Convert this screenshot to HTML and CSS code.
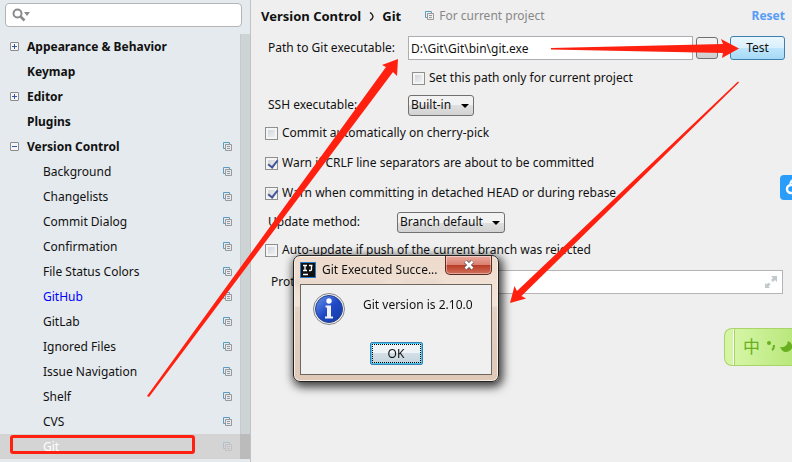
FILE: index.html
```html
<!DOCTYPE html>
<html lang="en">
<head>
    <meta charset="UTF-8">
    <title>Settings - Git</title>
    <link rel="stylesheet" href="styles.css">
</head>
<body>
    <svg class="defs" width="0" height="0" aria-hidden="true">
        <symbol id="copy" viewBox="0 0 10 10">
            <path d="M2 6.500H.5V.5h6V2" fill="none" stroke="#5b9dc0"/>
            <path d="M2.500 2.500h6v6h-6zM4 4.500h3M4 6.500h3" fill="none" stroke="#999"/>
        </symbol>
    </svg>

    <div class="settings">
        <nav class="sidebar">
            <div class="search">
                <svg width="20" height="14" viewBox="0 0 20 14" aria-hidden="true">
                    <circle cx="5.500" cy="5.500" r="4" fill="none" stroke="#8b8b8b" stroke-width="2"/>
                    <path d="M8.500 8.500l4 4" stroke="#8b8b8b" stroke-width="2.500"/>
                    <path d="M12 4h6l-3 4z" fill="#8b8b8b"/>
                </svg>
                <input type="text" aria-label="Search settings">
            </div>
            <ul class="tree">
                <li class="group"><button class="toggle plus" aria-label="Expand"></button><a href="#">Appearance &amp; Behavior</a></li>
                <li class="group"><a href="#">Keymap</a></li>
                <li class="group"><button class="toggle plus" aria-label="Expand"></button><a href="#">Editor</a></li>
                <li class="group"><a href="#">Plugins</a></li>
                <li class="group"><button class="toggle" aria-label="Collapse"></button><a href="#">Version Control</a><svg class="copy"><use href="#copy"/></svg></li>
                <li><a href="#">Background</a><svg class="copy"><use href="#copy"/></svg></li>
                <li><a href="#">Changelists</a><svg class="copy"><use href="#copy"/></svg></li>
                <li><a href="#">Commit Dialog</a><svg class="copy"><use href="#copy"/></svg></li>
                <li><a href="#">Confirmation</a><svg class="copy"><use href="#copy"/></svg></li>
                <li><a href="#">File Status Colors</a><svg class="copy"><use href="#copy"/></svg></li>
                <li class="changed"><a href="#">GitHub</a><svg class="copy"><use href="#copy"/></svg></li>
                <li><a href="#">GitLab</a><svg class="copy"><use href="#copy"/></svg></li>
                <li><a href="#">Ignored Files</a><svg class="copy"><use href="#copy"/></svg></li>
                <li><a href="#">Issue Navigation</a><svg class="copy"><use href="#copy"/></svg></li>
                <li><a href="#">Shelf</a><svg class="copy"><use href="#copy"/></svg></li>
                <li><a href="#">CVS</a><svg class="copy"><use href="#copy"/></svg></li>
                <li class="selected"><a href="#">Git</a><svg class="copy"><use href="#copy"/></svg></li>
            </ul>
        </nav>

        <main class="content">
            <header class="heading">
                <h1>Version Control</h1>
                <svg width="5" height="9" viewBox="0 0 5 9" aria-hidden="true"><path d="M1 .5q3 2 3 4t-3 4" fill="none" stroke="#222" stroke-width="1.500"/></svg>
                <h1>Git</h1>
                <span class="scope"><svg class="copy"><use href="#copy"/></svg>For current project</span>
                <a class="reset" href="#">Reset</a>
            </header>

            <div class="row path">
                <label for="gitPath">Path to Git executable:</label>
                <input type="text" id="gitPath" value="D:\Git\Git\bin\git.exe">
                <button class="browse" aria-label="Browse"></button>
                <button class="test">Test</button>
            </div>
            <div class="row indent">
                <input type="checkbox" id="onlyProject"><label for="onlyProject">Set this path only for current project</label>
            </div>
            <div class="row ssh">
                <label for="ssh">SSH executable:</label>
                <span class="select"><select id="ssh"><option>Built-in</option></select></span>
            </div>
            <div class="row check">
                <input type="checkbox" id="cherry"><label for="cherry">Commit automatically on cherry-pick</label>
            </div>
            <div class="row check">
                <input type="checkbox" id="crlf" checked><label for="crlf">Warn if CRLF line separators are about to be committed</label>
            </div>
            <div class="row check">
                <input type="checkbox" id="detached" checked><label for="detached">Warn when committing in detached HEAD or during rebase</label>
            </div>
            <div class="row update">
                <label for="update">Update method:</label>
                <span class="select"><select id="update"><option>Branch default</option></select></span>
            </div>
            <div class="row auto">
                <input type="checkbox" id="auto"><label for="auto">Auto-update if push of the current branch was rejected</label>
            </div>
            <div class="row protected">
                <label for="branches">Protected branches:</label>
                <div class="expandable">
                    <input type="text" id="branches" value="master">
                    <svg width="12" height="12" viewBox="0 0 12 12" aria-hidden="true">
                        <path d="M6 0h6v6l-2-2-2 2-2-2 2-2zM0 7l1.500 1.500L3.500 6.500l2 2-2 2L5 12H0z" fill="#c2c8cb"/>
                    </svg>
                </div>
            </div>
        </main>
    </div>

    <div class="dialog" role="dialog" aria-labelledby="dialogTitle">
        <div class="titlebar">
            <svg width="16" height="16" viewBox="0 0 16 16" aria-hidden="true">
                <rect width="16" height="16" fill="#2879c8"/>
                <rect x="1" y="1" width="14" height="14" fill="#111"/>
                <path d="M3 3.500h4M5 3.500v5M3 8.500h4M9 3.500h3.500M11.500 3.500v4q0 1-1 1H9M3 12.500h5" fill="none" stroke="#fff" stroke-width="1.300"/>
            </svg>
            <span id="dialogTitle">Git Executed Succe...</span>
            <button class="close" aria-label="Close">
                <svg width="12" height="10" viewBox="0 0 12 10"><path d="M2.500 1.500l7 7M9.500 1.500l-7 7" stroke="#555" stroke-width="4"/><path d="M2.500 1.500l7 7M9.500 1.500l-7 7" stroke="#fff" stroke-width="2.500"/></svg>
            </button>
        </div>
        <div class="dialog-body">
            <div class="message">
                <svg width="32" height="32" viewBox="0 0 32 32" aria-hidden="true">
                    <defs>
                        <linearGradient id="blue" x2="1" y2="1"><stop stop-color="#6b96e8"/><stop offset=".5" stop-color="#2049c8"/><stop offset="1" stop-color="#1638a0"/></linearGradient>
                    </defs>
                    <circle cx="16" cy="16" r="15.500" fill="#eee" stroke="#888"/>
                    <circle cx="16" cy="16" r="13.500" fill="url(#blue)" stroke="#26458f"/>
                    <circle cx="16" cy="8" r="2.700" fill="#fff"/>
                    <path d="M12.500 12.500h5.500v11h2v2h-8v-2h2v-9h-1.500z" fill="#f2f2f2"/>
                </svg>
                <span>Git version is 2.10.0</span>
            </div>
            <button class="ok">OK</button>
        </div>
    </div>

    <div class="side-badge">
        <svg width="24" height="25" viewBox="0 0 24 25" aria-hidden="true">
            <circle cx="11" cy="14" r="4" fill="none" stroke="#fff" stroke-width="2.500"/>
            <path d="M10 9l2-4" fill="none" stroke="#fff" stroke-width="2"/>
        </svg>
    </div>

    <div class="ime" lang="zh-CN">
        <span>中</span>
        <svg width="34" height="20" viewBox="0 0 34 20" aria-hidden="true">
            <circle cx="3" cy="6" r="2" fill="#68b020"/>
            <path d="M8 8q0 4-2 5" fill="none" stroke="#68b020" stroke-width="2"/>
            <path d="M22 4q-1 7-8 6 2 5 6 5 7-1 6-7-1-3-4-4z" fill="#68b020"/>
        </svg>
    </div>

    <!-- annotations -->
    <div class="marker"></div>
    <svg class="arrows" width="792" height="462" viewBox="0 0 792 462" aria-hidden="true">
        <path d="M147 396L386 67l-4-2 16-6-1 17-4-4L149 397z"/>
        <path d="M551 48l172-4-2-5 18 9.500-17 9.500 1-5-172-3.500z"/>
        <path d="M738 81.500L517 291l-2.500-5-4.500 17 16-4.500-4.500-2.500L739 82.500z"/>
    </svg>
</body>
</html>
```
FILE: styles.css
```css
* {
    box-sizing: border-box;
}

body {
    margin: 0;
    font-family: "Noto Sans", "Noto Sans CJK SC", sans-serif;
    font-size: 12px;
    line-height: 14px;
    color: #111;
    background: #efefef;
    overflow: hidden;
}

button, input, select {
    font: inherit;
    color: inherit;
    margin: 0;
}

a {
    color: inherit;
    text-decoration: none;
}

.defs {
    position: absolute;
}

.settings {
    display: flex;
    min-height: 100vh;
}

/* left tree */
.sidebar {
    width: 250px;
    flex: none;
    background: #e5eaee;
}

.search {
    display: flex;
    align-items: center;
    height: 24px;
    margin: 3px 8px 7px 5px;
    padding-left: 6px;
    background: #fff;
    border: 1px solid #b4b4b4;
    border-radius: 4px;
}

.search svg {
    flex: none;
}

.search input {
    flex: 1;
    min-width: 0;
    border: none;
    outline: none;
    background: none;
}

.tree {
    margin: 0;
    padding: 0;
    list-style: none;
    background: linear-gradient(to left, #ced3d6 9px, #c5cace 9px, #c5cace 10px, transparent 10px);
}

.tree li {
    display: flex;
    align-items: center;
    height: 25px;
    padding: 0 17px 0 43px;
}

.tree .group {
    padding-left: 27px;
    font-weight: bold;
}

.tree .copy {
    margin-left: auto;
}

.tree .changed {
    color: #0000ff;
}

.tree .selected {
    color: #fff;
    background: linear-gradient(to left, #bbb 10px, #d4d4d4 10px);
}

.selected .copy {
    opacity: 0.3;
}

.copy {
    width: 10px;
    height: 10px;
    flex: none;
}

.toggle {
    width: 9px;
    height: 9px;
    margin: 0 8px 0 -17px;
    padding: 0;
    border: 1px solid #8a8a8a;
    border-radius: 1px;
    background: linear-gradient(#3858a0, #3858a0) center / 5px 1px no-repeat, #f5f5f5;
}

.toggle.plus {
    background: linear-gradient(#3858a0, #3858a0) center / 5px 1px no-repeat,
        linear-gradient(#3858a0, #3858a0) center / 1px 5px no-repeat, #f5f5f5;
}

/* right panel */
.content {
    flex: 1;
    min-width: 0;
    padding-right: 7px;
    border-left: 1px solid #c2c2c2;
}

.heading {
    display: flex;
    align-items: center;
    height: 32px;
    padding-left: 10px;
}

.heading h1 {
    margin: 0;
    font-size: 13px;
}

.heading > svg {
    margin: 0 8px;
}

.scope {
    display: flex;
    align-items: center;
    gap: 4px;
    margin-left: 24px;
    color: #888;
}

.reset {
    margin-left: auto;
    color: #589df6;
    font-weight: bold;
}

.row {
    display: flex;
    align-items: center;
    height: 28px;
    padding-left: 17px;
}

.row > label {
    white-space: nowrap;
}

.row input[type="text"] {
    height: 24px;
    min-width: 0;
    padding: 0 2px;
    border: 1px solid #abadb3;
    background: #fff;
}

.path {
    height: 32px;
}

.path label, .ssh label {
    width: 140px;
}

.path input {
    flex: 1;
}

.browse, .test {
    height: 22px;
    padding: 0;
    border: 1px solid #707070;
    border-radius: 3px;
    background: linear-gradient(#f2f2f2 50%, #dcdcdc 50%, #cfcfcf);
}

.browse {
    width: 22px;
    margin: 0 12px 0 3px;
}

.test {
    width: 55px;
    height: 24px;
    border-color: #3c7fb1;
    background: linear-gradient(#eaf6fd, #d9f0fc 50%, #bee6fd 50%, #a7d9f5);
}

.indent {
    padding-left: 161px;
}

.ssh {
    height: 26px;
}

.check {
    height: 30px;
}

.check, .auto {
    padding-left: 14px;
}

.row input[type="checkbox"] {
    appearance: none;
    flex: none;
    width: 13px;
    height: 13px;
    margin-right: 4px;
    border: 1px solid #8e8f8f;
    background: linear-gradient(135deg, #cbcfd5, #f6f6f6);
    box-shadow: inset 0 0 0 2px #f4f4f4;
}

.row input[type="checkbox"]:checked::before {
    content: "";
    display: block;
    width: 4px;
    height: 8px;
    margin: 0 0 0 4px;
    border: solid #3f5597;
    border-width: 0 2px 2px 0;
    transform: rotate(38deg);
}

.update label {
    width: 129px;
}

.select {
    position: relative;
}

.select select {
    appearance: none;
    height: 21px;
    padding: 0 21px 0 2px;
    border: 1px solid #707070;
    border-radius: 3px;
    background: linear-gradient(#f2f2f2 50%, #dfdfdf 50%, #d2d2d2);
}

.select::after {
    content: "";
    position: absolute;
    right: 5px;
    top: 9px;
    border: 4px solid transparent;
    border-top-color: #000;
    border-bottom: none;
    pointer-events: none;
}

.protected {
    height: 36px;
    padding-left: 20px;
}

.protected label {
    width: 128px;
}

.expandable {
    display: flex;
    align-items: center;
    flex: 1;
    height: 24px;
    margin-right: 2px;
    padding-right: 5px;
    background: #fff;
    border: 1px solid #b4b4b4;
}

.expandable input[type="text"] {
    flex: 1;
    height: 20px;
    border: none;
}

/* message window */
.dialog {
    position: absolute;
    left: 293px;
    top: 255px;
    width: 206px;
    padding: 0 6px 6px;
    border: 1px solid #222;
    border-radius: 7px;
    background: linear-gradient(rgba(236, 215, 199, 0.9), rgba(242, 226, 214, 0.9) 50px, #e5d3c5 51px, #dfc8b6);
    backdrop-filter: blur(3px);
    box-shadow: inset 0 0 0 1px #fbeee4, 2px 3px 10px 2px rgba(0, 0, 0, 0.75);
}

.titlebar {
    display: flex;
    align-items: center;
    height: 28px;
    gap: 6px;
}

.close {
    display: flex;
    align-items: center;
    justify-content: center;
    align-self: flex-start;
    width: 47px;
    height: 19px;
    margin-left: auto;
    padding: 0;
    border: 1px solid #5a2a24;
    border-top: none;
    border-radius: 0 0 5px 5px;
    background: linear-gradient(#eba99d, #d98071 50%, #b93a24 50%, #d0705a);
    box-shadow: inset 0 0 0 1px rgba(255, 255, 255, 0.4);
}

.dialog-body {
    height: 91px;
    padding: 8px 12px;
    border: 1px solid #6f6860;
    background: #f0f0f0;
}

.message {
    display: flex;
    gap: 18px;
    height: 49px;
}

.message span {
    padding-top: 5px;
}

.ok {
    display: block;
    width: 53px;
    height: 23px;
    margin: 0 auto;
    padding: 0;
    border: 1px solid #3c7fb1;
    border-radius: 2px;
    outline: 1px dotted #000;
    outline-offset: -3px;
    background: linear-gradient(#eef3f6 50%, #d3dfe6 50%, #c3d3dc);
    box-shadow: inset 0 0 0 1px #48c8f0;
}

/* floating widgets on the right edge */
.side-badge {
    position: absolute;
    right: 0;
    top: 175px;
    width: 12px;
    height: 25px;
    overflow: hidden;
    border-radius: 4px 0 0 4px;
    background: #2a9dfb;
}

.ime {
    position: absolute;
    right: 0;
    top: 328px;
    display: flex;
    align-items: center;
    gap: 6px;
    width: 68px;
    height: 38px;
    padding-left: 18px;
    overflow: hidden;
    border: 1px solid #a9d468;
    border-right: none;
    border-radius: 8px 0 0 8px;
    background: linear-gradient(to right, #d5f5a5 8px, #fff 8px, #fff 9px, #a9d468 9px, #a9d468 10px, #d5f5a5 10px, #b9e87c);
    color: #68b020;
    font-size: 17px;
}

.ime svg {
    flex: none;
}

.marker {
    position: absolute;
    left: 10px;
    top: 435px;
    width: 185px;
    height: 19px;
    border: 3px solid #ff2010;
    border-radius: 3px;
}

.arrows {
    position: absolute;
    left: 0;
    top: 0;
    fill: #ff2010;
    pointer-events: none;
}
```
